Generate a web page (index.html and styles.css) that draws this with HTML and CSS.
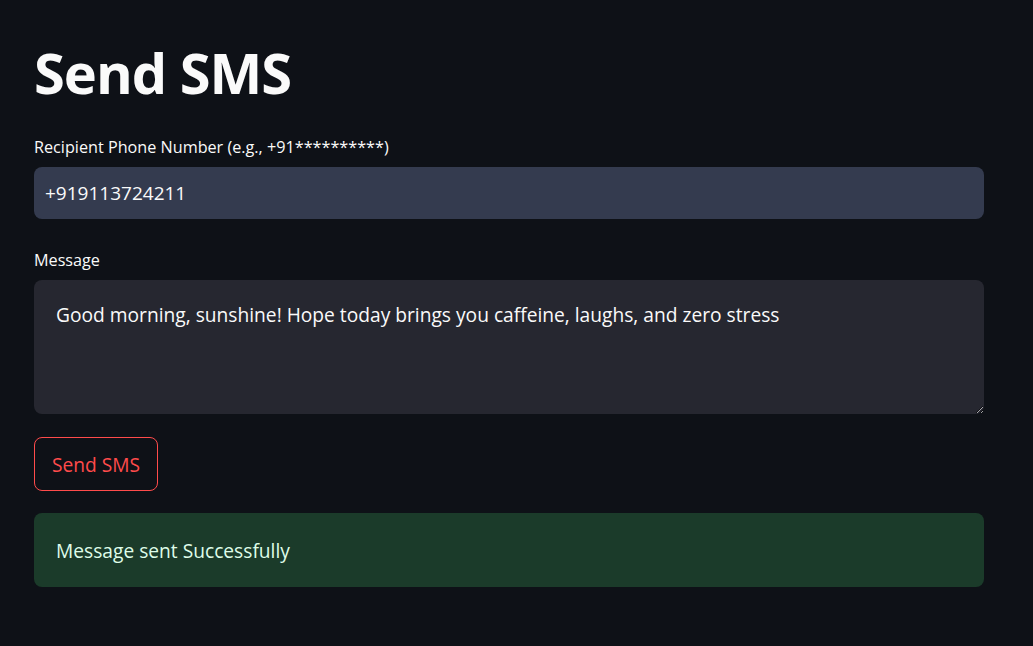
FILE: index.html
```html
<!DOCTYPE html>
<html lang="en">
<head>
<meta charset="utf-8">
<title>Send SMS</title>
<link rel="stylesheet" href="styles.css">
</head>
<body>
<main class="page">
  <h1 class="title">Send SMS</h1>
  <div class="field">
    <label class="label" for="phone">Recipient Phone Number (e.g., +91**********)</label>
    <input id="phone" class="input" type="text" value="+919113724211">
  </div>
  <div class="field">
    <label class="label" for="msg">Message</label>
    <textarea id="msg" class="textarea">Good morning, sunshine! Hope today brings you caffeine, laughs, and zero stress</textarea>
  </div>
  <div class="actions">
    <button class="btn" type="button">Send SMS</button>
  </div>
  <div class="alert">Message sent Successfully</div>
</main>
</body>
</html>
```

FILE: styles.css
```css
* { box-sizing: border-box; }
html, body {
  margin: 0;
  padding: 0;
  background: #0e1117;
  color: #fafafa;
  font-family: "Open Sans", "Noto Sans", sans-serif;
}
.page {
  width: 950px;
  margin-left: 34px;
  padding-top: 36px;
  display: flex;
  flex-direction: column;
}
.title {
  margin: 0;
  font-size: 56px;
  font-weight: 700;
  line-height: 72px;
  letter-spacing: -1px;
  color: #fafafa;
}
.field {
  display: flex;
  flex-direction: column;
}
.title + .field { margin-top: 28px; }
.field + .field { margin-top: 30px; }
.label {
  font-size: 16.2px;
  line-height: 22px;
  color: #fafafa;
  margin-bottom: 9px;
}
.input {
  height: 52px;
  border: none;
  border-radius: 8px;
  background: #343b4f;
  color: #fafafa;
  font-family: inherit;
  font-size: 19px;
  padding: 0 11px;
  outline: none;
}
.textarea {
  height: 134px;
  border: none;
  border-radius: 8px;
  background: #262730;
  color: #fafafa;
  font-family: inherit;
  font-size: 19.2px;
  line-height: 28px;
  padding: 21px 22px;
  resize: vertical;
  outline: none;
}
.actions {
  margin-top: 23px;
  display: flex;
}
.btn {
  height: 54px;
  padding: 0 17px;
  border: 1px solid #ff4b4b;
  border-radius: 8px;
  background: transparent;
  color: #ff4b4b;
  font-family: inherit;
  font-size: 19.2px;
}
.alert {
  margin-top: 22px;
  height: 74px;
  border-radius: 8px;
  background: #1b3b2a;
  color: #dffde9;
  font-size: 19.2px;
  padding: 0 22px;
  display: flex;
  align-items: center;
}
```
